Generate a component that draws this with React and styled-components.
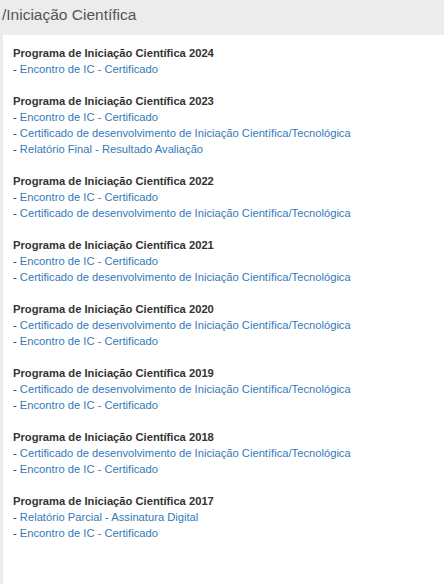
import styled, { createGlobalStyle } from 'styled-components'

const GlobalStyle = createGlobalStyle`
  html, body { margin: 0; padding: 0; background: #ececec; }
  body { font-family: "Liberation Sans", Arial, sans-serif; }
`;

const Page = styled.div`
  min-height: 584px;
  display: flex;
  flex-direction: column;
  background: #ececec;
`;

const Title = styled.h1`
  margin: 0;
  height: 35px;
  box-sizing: border-box;
  padding: 6px 0 0 2px;
  font-size: 15.5px;
  line-height: 18px;
  font-weight: normal;
  color: #555;
`;

const Panel = styled.div`
  flex: 1;
  margin-left: 3px;
  background: #fff;
  padding: 10px 10px 0 10px;
  font-size: 11.2px;
  line-height: 16px;
  color: #333;
`;

const Group = styled.div`
  margin-bottom: 16px;
`;

const Heading = styled.div`
  font-weight: bold;
`;

const Item = styled.div`
  color: #333;
`;

const Link = styled.a`
  color: #337ab7;
  text-decoration: none;
`;

const CERT = 'Encontro de IC - Certificado';
const DEV = 'Certificado de desenvolvimento de Iniciação Científica/Tecnológica';

const programs = [
  { year: 2024, links: [CERT] },
  { year: 2023, links: [CERT, DEV, 'Relatório Final - Resultado Avaliação'] },
  { year: 2022, links: [CERT, DEV] },
  { year: 2021, links: [CERT, DEV] },
  { year: 2020, links: [DEV, CERT] },
  { year: 2019, links: [DEV, CERT] },
  { year: 2018, links: [DEV, CERT] },
  { year: 2017, links: ['Relatório Parcial - Assinatura Digital', CERT] },
];

export default function App() {
  return (
    <Page>
      <GlobalStyle />
      <Title>/Iniciação Científica</Title>
      <Panel>
        {programs.map((p) => (
          <Group key={p.year}>
            <Heading>Programa de Iniciação Científica {p.year}</Heading>
            {p.links.map((l, i) => (
              <Item key={i}>- <Link href="#">{l}</Link></Item>
            ))}
          </Group>
        ))}
      </Panel>
    </Page>
  )
}
